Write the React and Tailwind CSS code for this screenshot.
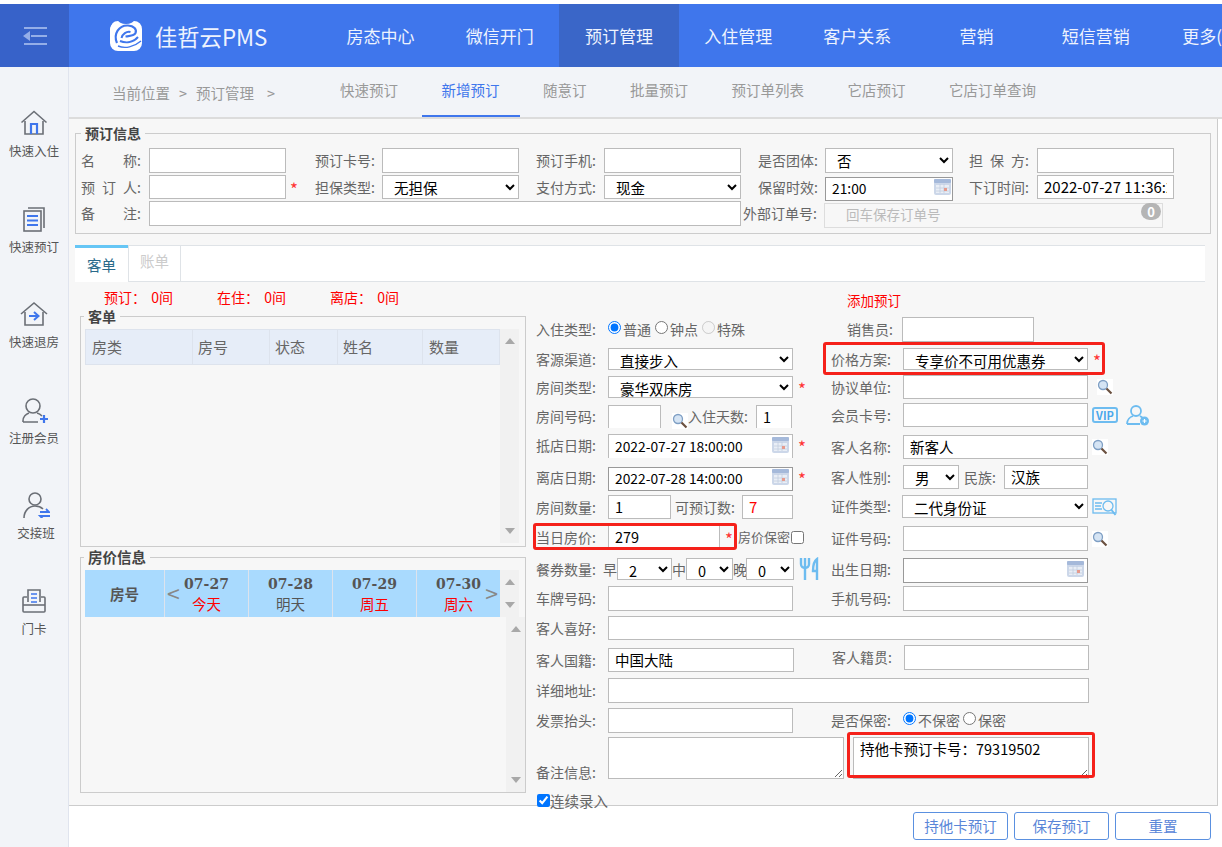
import React from 'react'

const inputCls = 'h-full min-w-0 border border-[#bbb] bg-white px-[6px] pb-[2px] text-[14.500px] text-black outline-none'
const darkCls = 'h-full w-full min-w-0 border border-[#999] bg-white px-[6px] pb-[1px] text-[13.800px] text-black outline-none'
const selectCls = 'h-full border border-[#bbb] bg-white pl-[7px] text-[14.500px] leading-[18px] text-black outline-none'

function SideIcon({ type }) {
    const gray = '#6b6f76'
    const blue = '#3f76ec'
    return (
        <svg width="28" height="26" viewBox="0 0 28 26" fill="none" stroke={gray} strokeWidth="1.600">
            {type === 'in' && <>
                <path d="M1.500 12.500 14 1.500l12.500 11" />
                <path d="M5 11v13h18V11" />
                <path d="M11 24V14h6v10" stroke={blue} strokeWidth="2.200" />
            </>}
            {type === 'book' && <>
                <path d="M8 2h16v20" />
                <rect x="4" y="5" width="17" height="20" />
                <path d="M7 10h11M7 14.500h11M7 19h11" stroke={blue} strokeWidth="1.800" />
            </>}
            {type === 'out' && <>
                <path d="M1 13 14 2l13 11" />
                <path d="M5 11v13h18V11" />
                <path d="M9 15h9M14 11l4.500 4-4.500 4" stroke={blue} strokeWidth="2" />
            </>}
            {type === 'user' && <>
                <circle cx="13" cy="9" r="7" />
                <path d="M3 25v-1c0-4 3-7 6-8M17 16c2 .6 4 2 5 3M3 25h15" />
                <path d="M24 18v8M20 22h8" stroke={blue} strokeWidth="2.200" />
            </>}
            {type === 'shift' && <>
                <circle cx="13" cy="7" r="6" />
                <path d="M2 26c0-7 5-12 11-12 3 0 6 1 8 3" />
                <path d="M18 20h9l-3-3M28 24h-10l3 3" stroke={blue} strokeWidth="1.800" />
            </>}
            {type === 'card' && <>
                <path d="M8 14V2h12v12" />
                <path d="M11 6h6M11 10h6M11 14h6" stroke={blue} strokeWidth="1.500" />
                <path d="M7 9H4c-1 0-1 1-1 1v13c0 1 1 1 1 1h20c1 0 1-1 1-1V10s0-1-1-1h-3" />
                <path d="M3 17h22" />
            </>}
        </svg>
    )
}

function Logo() {
    return (
        <svg width="34" height="33" viewBox="0 0 34 33">
            <rect x="1" y="2" width="32" height="30" rx="8" fill="#fff" />
            <ellipse cx="17" cy="1" rx="8" ry="4" fill="#3f76ec" />
            <path d="M0 0h6L0 10Z" fill="#3f76ec" />
            <path d="M28 0h6v8Z" fill="#3f76ec" />
            <path d="M8 24C4 15 10 6 19 6.500c6 .3 9 4 7.500 7.500-1.500 3-6 3-10 3.500" fill="none" stroke="#3f76ec" strokeWidth="2.200" />
            <path d="M12.500 19c1-4 5-7 9-6" fill="none" stroke="#3f76ec" strokeWidth="2" />
            <path d="M11 22c6 2.500 13 1.500 18-4" fill="none" stroke="#3f76ec" strokeWidth="2" />
            <path d="M9 27c7 3 16 1 23-5" fill="none" stroke="#3f76ec" strokeWidth="1.400" />
        </svg>
    )
}

function CalendarIcon() {
    return (
        <svg width="17" height="16" viewBox="0 0 17 16">
            <rect x="0" y="0" width="17" height="16" rx="2" fill="#ccd7e9" />
            <rect x="0" y="0" width="17" height="4" rx="1" fill="#a5b9da" />
            <path d="M2 6h13v8H2z" fill="#e9eef6" />
            <path d="M2 9h13M2 12h13M6 5v9M10 5v9" stroke="#c2cde0" strokeWidth="0.800" />
            <rect x="10" y="9" width="3" height="3" fill="#e59a8d" />
        </svg>
    )
}

function SearchIcon() {
    return (
        <svg width="16" height="16" viewBox="0 0 16 16" fill="none" className="shrink-0 bg-white">
            <circle cx="6" cy="6" r="4.500" fill="#d5e4f4" stroke="#7f9fc4" strokeWidth="1.300" />
            <path d="M9.500 9.500 14.500 14.500" stroke="#6b5140" strokeWidth="2.200" />
        </svg>
    )
}

function ScrollBar() {
    return (
        <div className="flex w-[19px] shrink-0 flex-col items-center justify-between bg-[#f1f1f1] py-[9px]">
            <svg width="10" height="6" viewBox="0 0 10 6"><path d="M5 0 10 6H0Z" fill="#a8a8a8" /></svg>
            <svg width="10" height="6" viewBox="0 0 10 6"><path d="M0 0H10L5 6Z" fill="#a8a8a8" /></svg>
        </div>
    )
}

function Spread({ a, b, c, w = 'w-[60px]' }) {
    return (
        <span className={'flex shrink-0 justify-between pb-[1px] text-[14px] leading-[20px] text-[#666] ' + w}>
            <span>{a}</span>
            {c && <span>{c}</span>}
            <span>{b}</span>
        </span>
    )
}

function Label({ children, w = 'w-[72px]' }) {
    return <span className={'shrink-0 whitespace-nowrap pb-[1px] text-[14px] leading-[20px] text-[#666] ' + w}>{children}</span>
}

function Star({ className = '' }) {
    return <span className={'pt-[3px] text-[17px] leading-[20px] text-[#f33] ' + className}>*</span>
}

function Select({ value, className }) {
    return (
        <select defaultValue={value} className={selectCls + ' ' + className}>
            <option>{value}</option>
        </select>
    )
}

function Radio({ label, checked, disabled, name }) {
    return (
        <label className="flex items-center whitespace-nowrap text-[14px] leading-[20px] text-[#666]">
            <input type="radio" name={name} defaultChecked={checked} disabled={disabled} className="mb-[3px] mr-[2px] h-[13px] w-[13px]" />
            <span>{label}</span>
        </label>
    )
}

function RedBox({ className }) {
    return <div className={'pointer-events-none absolute rounded-[3px] border-[3px] border-[#f5211a] ' + className}></div>
}

const navItems = ['房态中心', '微信开门', '预订管理', '入住管理', '客户关系', '营销', '短信营销']
const tabs = ['快速预订', '新增预订', '随意订', '批量预订', '预订单列表', '它店预订', '它店订单查询']
const sideItems = [
    { type: 'in', text: '快速入住' },
    { type: 'book', text: '快速预订' },
    { type: 'out', text: '快速退房' },
    { type: 'user', text: '注册会员' },
    { type: 'shift', text: '交接班' },
    { type: 'card', text: '门卡' },
]
const days = [
    { date: '07-27', text: '今天', red: true, w: 'w-[84px]' },
    { date: '07-28', text: '明天', w: 'w-[84px]' },
    { date: '07-29', text: '周五', red: true, w: 'w-[84px]' },
    { date: '07-30', text: '周六', red: true, w: 'w-[83px]' },
]

export default function App() {
    return (
        <div className="flex h-[847px] w-[1222px] flex-col overflow-hidden bg-white pt-[4px] font-['Noto_Sans_CJK_SC','Liberation_Sans',sans-serif]">
            {/* top bar */}
            <div className="flex h-[63px] shrink-0 bg-[#3f76ec] text-[#eef3fe]">
                <div className="flex w-[69px] shrink-0 items-center justify-center bg-[#3762c9]">
                    <svg width="24" height="20" viewBox="0 0 24 20" fill="#94aee8">
                        <path d="M0 10 7 5v10Z" />
                        <path d="M1 1h23v2H1zM8 9h16v2H8zM1 17h23v2H1z" />
                    </svg>
                </div>
                <div className="flex w-[252px] shrink-0 items-center pl-[40px]">
                    <Logo />
                    <span className="ml-[12px] text-[22.300px] leading-[30px]">佳哲云PMS</span>
                </div>
                <div className="flex">
                    {navItems.map((item) => (
                        <div key={item} className={'flex w-[119.200px] shrink-0 items-center justify-center text-[17px] ' + (item === '预订管理' ? 'bg-[#3a66c8]' : '')}>
                            {item}
                        </div>
                    ))}
                    <div className="flex items-center whitespace-nowrap pl-[27px] text-[17px]">更多(</div>
                </div>
            </div>

            <div className="flex min-h-0 flex-1">
                {/* left sidebar */}
                <div className="flex w-[69px] shrink-0 flex-col items-center border-r border-[#e0e4ee] bg-[#f2f4f8] pt-[43px]">
                    {sideItems.map((item) => (
                        <div key={item.text} className={'flex h-[95.500px] shrink-0 flex-col items-center ' + (item.type === 'shift' ? 'pl-[4px]' : '')}>
                            <SideIcon type={item.type} />
                            <span className="mt-[6px] whitespace-nowrap text-[12.500px] leading-[18px] text-[#555]">{item.text}</span>
                        </div>
                    ))}
                </div>

                <div className="flex min-w-0 flex-1 flex-col">
                    {/* sub nav */}
                    <div className="flex h-[52px] shrink-0 border-b-2 border-[#dcdcdc] bg-[#f2f4f8] text-[14.500px] text-[#999]">
                        <div className="flex w-[251px] shrink-0 items-center pl-[43px] pt-[2px]">
                            <span>当前位置</span>
                            <span className="ml-[9px]">&gt;</span>
                            <span className="ml-[9px]">预订管理</span>
                            <span className="ml-[13px]">&gt;</span>
                        </div>
                        <div className="flex gap-[3.500px]">
                            {tabs.map((tab) => (
                                <div key={tab} className={'flex items-center whitespace-nowrap border-b-2 px-[20px] pb-[2px] ' + (tab === '新增预订' ? 'border-[#3f76ec] text-[#3f76ec]' : 'border-transparent')}>
                                    {tab}
                                </div>
                            ))}
                        </div>
                    </div>

                    {/* main panel */}
                    <div className="mr-[4px] h-[687px] shrink-0 border-b border-r border-[#ccc] bg-[#f7f7f7] pl-[6px] pt-[4px]">
                        <fieldset className="w-[1136px] border border-[#ccc] pb-[7px] pl-[5px]">
                            <legend className="px-[4px] text-[14px] font-bold leading-[20px] text-[#444]">预订信息</legend>
                            <div className="pt-[5px]">
                                <div className="flex h-[25px]">
                                    <div className="flex w-[234px] shrink-0 items-center"><Spread a="名" b="称:" /><input className={inputCls + ' ml-[8px] w-[137px]'} /></div>
                                    <div className="flex w-[221px] shrink-0 items-center"><Label w="w-[67px]">预订卡号:</Label><input className={inputCls + ' w-[137px]'} /></div>
                                    <div className="flex w-[222px] shrink-0 items-center"><Label w="w-[68px]">预订手机:</Label><input className={inputCls + ' w-[137px]'} /></div>
                                    <div className="flex w-[211px] shrink-0 items-center"><Label w="w-[67px]">是否团体:</Label><Select value="否" className="h-[22px] w-[128px]" /></div>
                                    <div className="flex items-center"><Spread a="担" c="保" b="方:" /><input className={inputCls + ' ml-[8px] w-[137px]'} /></div>
                                </div>
                                <div className="mt-[2px] flex h-[24px]">
                                    <div className="flex w-[234px] shrink-0 items-center"><Spread a="预" c="订" b="人:" /><input className={inputCls + ' ml-[8px] w-[137px]'} /><Star className="ml-[4px]" /></div>
                                    <div className="flex w-[221px] shrink-0 items-center"><Label w="w-[67px]">担保类型:</Label><Select value="无担保" className="h-[22px] w-[137px]" /></div>
                                    <div className="flex w-[222px] shrink-0 items-center"><Label w="w-[68px]">支付方式:</Label><Select value="现金" className="h-[22px] w-[137px]" /></div>
                                    <div className="flex w-[211px] shrink-0 items-center">
                                        <Label w="w-[67px]">保留时效:</Label>
                                        <div className="relative h-full w-[128px]">
                                            <input defaultValue="21:00" className={darkCls} />
                                            <div className="absolute right-[2px] top-[4px]"><CalendarIcon /></div>
                                        </div>
                                    </div>
                                    <div className="flex items-center">
                                        <Label w="w-[68px]">下订时间:</Label>
                                        <input defaultValue="2022-07-27 11:36:22" className="h-full w-[137px] min-w-0 border border-[#bbb] bg-white px-[6px] pb-[1px] text-[15px] text-black outline-none" />
                                    </div>
                                </div>
                                <div className="mt-[2px] flex h-[25px]">
                                    <div className="flex w-[662px] shrink-0 items-center"><Spread a="备" b="注:" /><input className={inputCls + ' ml-[8px] w-[592px]'} /></div>
                                    <div className="flex items-center">
                                        <Label w="w-[81px]">外部订单号:</Label>
                                        <div className="relative h-full w-[339px]">
                                            <input placeholder="回车保存订单号" className="h-full w-full border border-[#ddd] bg-[#f7f7f7] pb-[3px] pl-[21px] text-[13.500px] outline-none placeholder:text-[#bbb]" />
                                            <span className="absolute right-[2px] top-[2px] flex h-[17px] w-[20px] items-center justify-center rounded-full bg-[#b5b5b5] text-[13px] font-bold leading-none text-white">0</span>
                                        </div>
                                    </div>
                                </div>
                            </div>
                        </fieldset>

                        {/* tabs */}
                        <div className="mt-[11px] flex h-[37px] w-[1130px] border-b border-t border-[#dfe3e7] bg-white">
                            <div className="mt-[-1px] flex h-[37px] w-[53px] items-center justify-center border-t-[3px] border-[#66c6f5] bg-white text-[14.500px] text-[#2a6a8a]">客单</div>
                            <div className="flex w-[53px] items-center justify-center border-l border-r border-[#dfe3e7] pb-[5px] text-[14.500px] text-[#ccc]">账单</div>
                        </div>

                        <div className="flex pl-[5px]">
                            {/* left column */}
                            <div className="w-[446px] shrink-0">
                                <div className="flex h-[24px] pl-[24px] pt-[5px] text-[14px] leading-[20px] text-[#f00] [word-spacing:2px]">
                                    <span className="w-[113px]">预订： 0间</span>
                                    <span className="w-[113px]">在住： 0间</span>
                                    <span>离店： 0间</span>
                                </div>
                                <fieldset className="h-[241px] border border-[#ccc] pl-[4px]">
                                    <legend className="ml-[-1px] px-[4px] text-[14px] font-bold leading-[20px] text-[#444]">客单</legend>
                                    <div className="flex h-[217px] pt-[3px]">
                                        <div className="w-[415px]">
                                            <div className="flex h-[36px] border border-[#dde3ed] bg-[#e6edf8] text-[15px] text-[#666]">
                                                <div className="flex w-[107px] items-center border-r border-[#dde3ed] pl-[6px]">房类</div>
                                                <div className="flex w-[77px] items-center border-r border-[#dde3ed] pl-[5px]">房号</div>
                                                <div className="flex w-[68px] items-center border-r border-[#dde3ed] pl-[5px]">状态</div>
                                                <div className="flex w-[85px] items-center border-r border-[#dde3ed] pl-[5px]">姓名</div>
                                                <div className="flex flex-1 items-center pl-[6px]">数量</div>
                                            </div>
                                        </div>
                                        <ScrollBar />
                                    </div>
                                </fieldset>
                                <fieldset className="h-[246px] border border-[#ccc] pl-[4px]">
                                    <legend className="ml-[-1px] px-[4px] text-[14.500px] font-bold leading-[20px] text-[#444]">房价信息</legend>
                                    <div className="pt-[3px]">
                                        <div className="flex h-[47px]">
                                            <div className="flex w-[415px] bg-[#a9dafe] text-[#555]">
                                                <div className="flex w-[80px] items-center justify-center border-r border-[#dde3ed] text-[14.500px] font-bold">房号</div>
                                                {days.map((d, i) => (
                                                    <div key={d.date} className={'relative flex flex-col items-center justify-center ' + d.w + (i < 3 ? ' border-r border-[#dde3ed]' : '')}>
                                                        <span className="font-['DejaVu_Serif',serif] text-[14px] font-bold leading-[20px]">{d.date}</span>
                                                        <span className={'text-[14.500px] leading-[20px] ' + (d.red ? 'text-[#f00]' : '')}>{d.text}</span>
                                                        {i === 0 && <span className="absolute left-[2px] top-[9px] text-[23px] leading-[28px] text-[#888]">&lt;</span>}
                                                        {i === 3 && <span className="absolute right-[2px] top-[9px] text-[23px] leading-[28px] text-[#888]">&gt;</span>}
                                                    </div>
                                                ))}
                                            </div>
                                            <ScrollBar />
                                        </div>
                                        <div className="flex h-[175px] justify-end">
                                            <ScrollBar />
                                        </div>
                                    </div>
                                </fieldset>
                            </div>

                            {/* right form */}
                            <div className="ml-[10px] w-[560px]">
                                <div className="h-[35px] pl-[311px] pt-[8px] text-[13.500px] leading-[20px] text-[#f00]">添加预订</div>
                                <div className="flex">
                                    <div className="w-[295px] shrink-0">
                                        <div className="flex h-[24px] items-center">
                                            <Label>入住类型:</Label>
                                            <Radio name="t" label="普通" checked />
                                            <span className="w-[4px]"></span>
                                            <Radio name="t" label="钟点" />
                                            <span className="w-[4px]"></span>
                                            <Radio name="t" label="特殊" disabled />
                                        </div>
                                        <div className="mt-[7px] flex h-[22px] items-center"><Label>客源渠道:</Label><Select value="直接步入" className="w-[185px]" /></div>
                                        <div className="mt-[6px] flex h-[22px] items-center"><Label>房间类型:</Label><Select value="豪华双床房" className="w-[185px]" /><Star className="ml-[5px]" /></div>
                                        <div className="mt-[7px] flex h-[23px] items-center">
                                            <Label>房间号码:</Label>
                                            <input className={inputCls + ' w-[53px] border-b-0'} />
                                            <span className="ml-[11px] mt-[8px]"><SearchIcon /></span>
                                            <Label w="w-[68px]">入住天数:</Label>
                                            <input defaultValue="1" className={inputCls + ' w-[36px] border-b-0'} />
                                        </div>
                                        <div className="mt-[5px] flex h-[24px] items-center">
                                            <Label>抵店日期:</Label>
                                            <div className="relative h-full w-[185px]">
                                                <input defaultValue="2022-07-27 18:00:00" className="h-full w-full min-w-0 border border-b-0 border-[#bbb] bg-white px-[6px] pb-[1px] text-[13.800px] text-black outline-none" />
                                                <div className="absolute right-[4px] top-[4px]"><CalendarIcon /></div>
                                            </div>
                                            <Star className="ml-[5px]" />
                                        </div>
                                        <div className="mt-[8px] flex h-[24px] items-center">
                                            <Label>离店日期:</Label>
                                            <div className="relative h-full w-[185px]">
                                                <input defaultValue="2022-07-28 14:00:00" className={darkCls} />
                                                <div className="absolute right-[4px] top-[4px]"><CalendarIcon /></div>
                                            </div>
                                            <Star className="ml-[5px]" />
                                        </div>
                                        <div className="mt-[6px] flex h-[24px] items-center">
                                            <Label>房间数量:</Label>
                                            <input defaultValue="1" className={inputCls + ' w-[63px]'} />
                                            <Label w="w-[71px] pl-[4px]">可预订数:</Label>
                                            <input defaultValue="7" className="h-full w-[51px] min-w-0 border border-[#bbb] bg-white px-[6px] pb-[2px] text-[15px] text-[#f00] outline-none" />
                                        </div>
                                        <div className="relative mt-[6px] flex h-[24px] items-center">
                                            <Label>当日房价:</Label>
                                            <input defaultValue="279" className={inputCls + ' w-[112px]'} />
                                            <Star className="ml-[5px] w-[13px]" />
                                            <span className="whitespace-nowrap text-[13px] leading-[20px] text-[#666]">房价保密</span>
                                            <input type="checkbox" className="ml-[1px] h-[13px] w-[13px]" />
                                            <RedBox className="left-[-3px] top-[-2px] h-[27px] w-[204px]" />
                                        </div>
                                        <div className="mt-[9px] flex h-[22px] items-center">
                                            <Label w="w-[67px]">餐券数量:</Label>
                                            <Label w="w-[14px]">早</Label>
                                            <Select value="2" className="w-[55px]" />
                                            <Label w="w-[14px]">中</Label>
                                            <Select value="0" className="w-[47px]" />
                                            <Label w="w-[13px]">晚</Label>
                                            <Select value="0" className="w-[48px]" />
                                            <svg width="20" height="24" viewBox="0 0 20 24" fill="none" stroke="#6dbcf0" strokeWidth="2.400" className="ml-[5px] shrink-0">
                                                <path d="M2 1v6c0 3 2 4 4 4s4-1 4-4V1M6 1v22" />
                                                <path d="M18 23V2c-3 2-4 7-4 12h4" />
                                            </svg>
                                        </div>
                                        <div className="mt-[6px] flex h-[25px] items-center"><Label>车牌号码:</Label><input className={inputCls + ' w-[185px]'} /></div>
                                    </div>

                                    <div className="flex-1">
                                        <div className="flex h-[25px] items-center"><Label w="w-[71px] pl-[16px]">销售员:</Label><input className={inputCls + ' w-[132px]'} /></div>
                                        <div className="relative mt-[6px] flex h-[22px] items-center">
                                            <Label>价格方案:</Label>
                                            <Select value="专享价不可用优惠券" className="w-[185px]" />
                                            <Star className="ml-[5px]" />
                                            <RedBox className="left-[-8px] top-[-6px] h-[33px] w-[282px]" />
                                        </div>
                                        <div className="mt-[5px] flex h-[24px] items-center"><Label>协议单位:</Label><input className={inputCls + ' w-[185px]'} /><span className="ml-[9px]"><SearchIcon /></span></div>
                                        <div className="mt-[4px] flex h-[24px] items-center">
                                            <Label>会员卡号:</Label>
                                            <input className={inputCls + ' w-[185px]'} />
                                            <span className="ml-[4px] flex h-[16px] w-[26px] items-center justify-center rounded-[3px] border-2 border-[#6dbcf0] text-[11px] font-bold leading-none text-[#4aa8ec]">VIP</span>
                                            <svg width="24" height="22" viewBox="0 0 24 22" fill="none" stroke="#6dbcf0" strokeWidth="1.800" className="ml-[8px] shrink-0">
                                                <circle cx="10" cy="7" r="5" />
                                                <path d="M1 20c0-4 3-7 6-8M14 12l3 2M1 20h13" />
                                                <circle cx="18.500" cy="17" r="4.500" fill="#6dbcf0" stroke="none" />
                                                <path d="M18.500 15v4M16.500 17h4" stroke="#fff" strokeWidth="1.200" />
                                            </svg>
                                        </div>
                                        <div className="mt-[8px] flex h-[24px] items-center"><Label>客人名称:</Label><input defaultValue="新客人" className={inputCls + ' w-[185px]'} /><span className="ml-[4px]"><SearchIcon /></span></div>
                                        <div className="mt-[6px] flex h-[24px] items-center">
                                            <Label>客人性别:</Label>
                                            <Select value="男" className="h-[22px] w-[56px]" />
                                            <Label w="w-[45px] pl-[5px]">民族:</Label>
                                            <input defaultValue="汉族" className={inputCls + ' w-[84px]'} />
                                        </div>
                                        <div className="mt-[6px] flex h-[23px] items-center">
                                            <Label w="w-[71px]">证件类型:</Label>
                                            <Select value="二代身份证" className="w-[186px]" />
                                            <svg width="26" height="18" viewBox="0 0 26 18" fill="none" stroke="#6dbcf0" strokeWidth="1.300" className="ml-[4px] shrink-0">
                                                <rect x="1" y="1" width="23" height="14" />
                                                <path d="M3 5h7M3 8h6M3 11h7" />
                                                <circle cx="16" cy="8" r="5" />
                                                <path d="m19.500 12 4 5" strokeWidth="2" />
                                            </svg>
                                        </div>
                                        <div className="mt-[8px] flex h-[25px] items-center"><Label>证件号码:</Label><input className={inputCls + ' w-[185px]'} /><span className="ml-[4px]"><SearchIcon /></span></div>
                                        <div className="mt-[6px] flex h-[25px] items-center">
                                            <Label>出生日期:</Label>
                                            <div className="relative h-full w-[185px]">
                                                <input className={darkCls} />
                                                <div className="absolute right-[4px] top-[4px]"><CalendarIcon /></div>
                                            </div>
                                        </div>
                                        <div className="mt-[4px] flex h-[25px] items-center"><Label>手机号码:</Label><input className={inputCls + ' w-[185px]'} /></div>
                                    </div>
                                </div>

                                <div className="mt-[5px] flex h-[24px] items-center"><Label>客人喜好:</Label><input className={inputCls + ' w-[481px]'} /></div>
                                <div className="mt-[5px] flex h-[27px]">
                                    <div className="flex w-[296px] shrink-0 items-center pt-[3px]"><Label>客人国籍:</Label><input defaultValue="中国大陆" className={inputCls + ' w-[186px]'} /></div>
                                    <div className="flex h-[25px] items-center"><Label>客人籍贯:</Label><input className={inputCls + ' w-[185px]'} /></div>
                                </div>
                                <div className="mt-[6px] flex h-[25px] items-center"><Label>详细地址:</Label><input className={inputCls + ' w-[481px]'} /></div>
                                <div className="mt-[5px] flex h-[24px] items-center">
                                    <div className="flex w-[295px] shrink-0 items-center"><Label>发票抬头:</Label><input className={inputCls + ' h-[24px] w-[185px]'} /></div>
                                    <Label>是否保密:</Label>
                                    <Radio name="s" label="不保密" checked />
                                    <span className="w-[3px]"></span>
                                    <Radio name="s" label="保密" />
                                </div>
                                <div className="mt-[5px] flex h-[42px]">
                                    <Label w="w-[72px] self-end mb-[-4px]">备注信息:</Label>
                                    <textarea className="h-[42px] w-[236px] border border-[#bbb] bg-white text-[14px] outline-none"></textarea>
                                    <div className="relative ml-[9px] h-[42px] w-[236px]">
                                        <textarea defaultValue="持他卡预订卡号：79319502" className="h-[42px] w-[236px] border border-[#bbb] bg-white px-[6px] text-[14.500px] leading-[22px] text-black outline-none"></textarea>
                                        <RedBox className="left-[-6px] top-[-5px] h-[46px] w-[248px]" />
                                    </div>
                                </div>
                                <div className="mt-[15px] flex h-[13px] items-center">
                                    <input type="checkbox" defaultChecked className="ml-[1px] h-[13px] w-[13px]" />
                                    <span className="whitespace-nowrap text-[14.500px] leading-[20px] text-[#666]">连续录入</span>
                                </div>
                            </div>
                        </div>
                    </div>

                    {/* footer buttons */}
                    <div className="flex flex-1 justify-end gap-[6px] pr-[11px] pt-[6px]">
                        <button className="h-[28px] w-[95px] rounded-[3px] border border-[#5a90e0] bg-white text-[14.500px] text-[#5a86d8]">持他卡预订</button>
                        <button className="h-[28px] w-[95px] rounded-[3px] border border-[#5a90e0] bg-white text-[14.500px] text-[#5a86d8]">保存预订</button>
                        <button className="h-[28px] w-[96px] rounded-[3px] border border-[#5a90e0] bg-white text-[14.500px] text-[#5a86d8]">重置</button>
                    </div>
                </div>
            </div>
        </div>
    )
}
